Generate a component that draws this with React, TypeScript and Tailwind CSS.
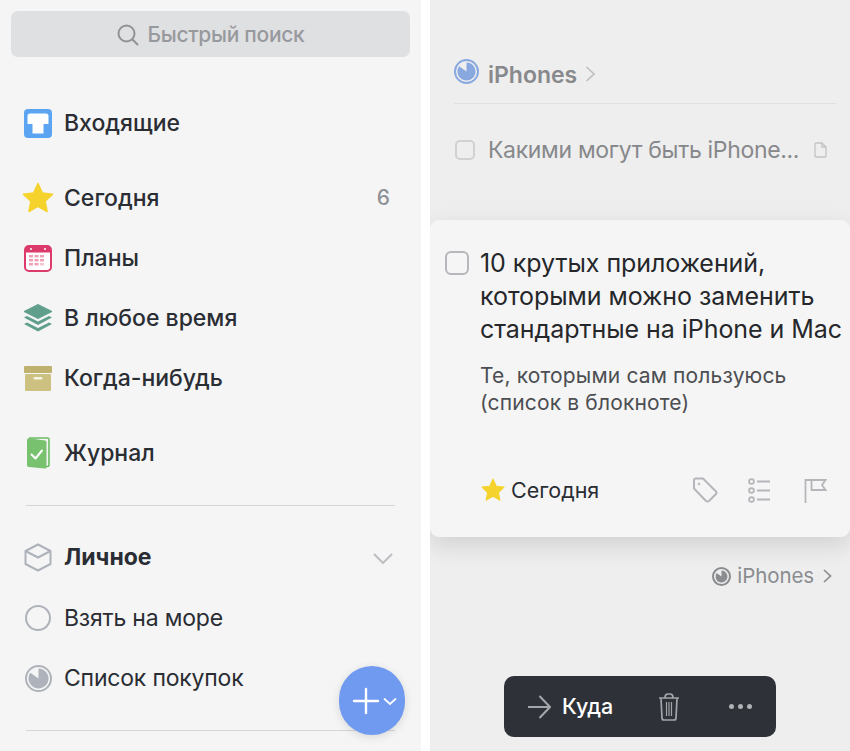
import React from 'react';

const font = "font-['Inter','Roboto',sans-serif]";

const InboxIcon = () => (
  <svg width="28" height="29" viewBox="0 0 28 29">
    <rect x="0" y="0" width="28" height="29" rx="4" fill="#5ba4f2" />
    <path d="M3.5 7 Q3.5 4.5 6 4.5 H22 Q24.5 4.5 24.5 7 V15 H19.5 V24.5 H8.5 V15 H3.5 Z" fill="#fff" />
  </svg>
);

const StarIcon = ({ size = 32 }: { size?: number }) => (
  <svg width={size} height={size} viewBox="0 0 32 32">
    <path
      d="M16 1.5 L20.4 11 L30.6 12.2 L23.1 19.3 L25.1 29.5 L16 24.4 L6.9 29.5 L8.9 19.3 L1.4 12.2 L11.6 11 Z"
      fill="#f5d32c"
      stroke="#f5d32c"
      strokeWidth="1.5"
      strokeLinejoin="round"
    />
  </svg>
);

const CalendarIcon = () => (
  <svg width="28" height="27" viewBox="0 0 28 27">
    <rect x="1" y="1" width="26" height="25" rx="4" fill="#fff" stroke="#dc3a6b" strokeWidth="2" />
    <path d="M1 5 Q1 1 5 1 H23 Q27 1 27 5 V7.5 H1 Z" fill="#dc3a6b" />
    <circle cx="7" cy="4" r="1" fill="#fff" />
    <circle cx="21" cy="4" r="1" fill="#fff" />
    {[10, 14, 18].map((y) =>
      [5, 10.5, 16].map((x) => (
        <rect key={`${x}-${y}`} x={x} y={y} width="4" height="2.4" fill={y === 18 && x === 16 ? '#f6c5d4' : '#f09db6'} />
      ))
    )}
  </svg>
);

const LayersIcon = () => (
  <svg width="30" height="28" viewBox="0 0 30 28">
    <path d="M15 0.5 L29 7.5 L15 14.5 L1 7.5 Z" fill="#5f9f8c" stroke="#5f9f8c" strokeLinejoin="round" />
    <path d="M4 12 L1 13.6 L15 21 L29 13.6 L26 12 L15 17.6 Z" fill="#5f9f8c" />
    <path d="M4 18.5 L1 20 L15 27.5 L29 20 L26 18.5 L15 24 Z" fill="#5f9f8c" />
  </svg>
);

const BoxIcon = () => (
  <svg width="28" height="25" viewBox="0 0 28 25">
    <rect x="0" y="0" width="28" height="7" rx="1" fill="#bfb26f" />
    <rect x="1" y="8" width="26" height="17" rx="1" fill="#cdc182" />
    <rect x="9.5" y="11" width="9" height="2.4" rx="1" fill="#f5f3e4" />
  </svg>
);

const LogbookIcon = () => (
  <svg width="24" height="32" viewBox="0 0 24 32">
    <path d="M3 1 H21.5 Q23 1 23 2.5 V28 Q23 29.5 21.5 29.5 H20" fill="none" stroke="#6cbc63" strokeWidth="1.6" />
    <path d="M1 3 Q1 1 3 1.2 L19 3.4 Q20.5 3.6 20.5 5 V30 Q20.5 31.6 19 31.4 L3 30 Q1 29.8 1 28 Z" fill="#78c16e" />
    <path d="M5.5 17.5 L9.5 21.5 L16 13.5" fill="none" stroke="#fff" strokeWidth="2" strokeLinecap="round" strokeLinejoin="round" />
  </svg>
);

const CubeIcon = () => (
  <svg width="28" height="29" viewBox="0 0 28 29" fill="none" stroke="#aeb2ba" strokeWidth="2" strokeLinejoin="round">
    <path d="M14 1.5 L26.5 8 V21 L14 27.5 L1.5 21 V8 Z" />
    <path d="M1.5 8 L14 14.5 L26.5 8" />
  </svg>
);

const ProgressRing = ({ size, color, border = 2 }: { size: number; color: string; border?: number }) => {
  // pie with the upper left slice left open
  const c = size / 2;
  const r = size / 2 - border - 1.5;
  return (
    <svg width={size} height={size} viewBox={`0 0 ${size} ${size}`}>
      <circle cx={c} cy={c} r={c - border / 2} fill="none" stroke={color} strokeWidth={border} />
      <path d={`M${c} ${c} L${c} ${c - r} A${r} ${r} 0 1 1 ${c - r * 0.82} ${c - r * 0.57} Z`} fill={color} />
    </svg>
  );
};

const SideRow = ({
  icon,
  label,
  weight = 'font-[550]',
  right,
}: {
  icon: React.ReactNode;
  label: string;
  weight?: string;
  right?: React.ReactNode;
}) => (
  <div className="flex h-[60px] items-center">
    <div className="w-[64px] shrink-0 pl-[22px]">
      <div className="flex w-[32px] justify-center">{icon}</div>
    </div>
    <span className={`flex-1 text-[23px] text-[#2a2d33] ${weight}`}>{label}</span>
    {right}
  </div>
);

const Sidebar = () => (
  <div className="relative h-[751px] w-[421px] shrink-0 overflow-hidden bg-[#f5f5f5]">
    <div className="mx-[11px] mt-[11px] flex h-[46px] w-[399px] items-center justify-center gap-[9px] rounded-[7px] bg-[#dfe0e2] pt-[1px]">
      <svg width="22" height="22" viewBox="0 0 22 22" fill="none" stroke="#909296" strokeWidth="2" strokeLinecap="round">
        <circle cx="9.5" cy="9.5" r="8" />
        <path d="M15.5 15.5 L20.5 20.5" />
      </svg>
      <span className="text-[21px] font-medium tracking-[-0.3px] text-[#98999d]">Быстрый поиск</span>
    </div>

    <div className="mt-[36px]">
      <SideRow icon={<InboxIcon />} label="Входящие" />
    </div>
    <div className="mt-[15px]">
      <SideRow
        icon={<StarIcon />}
        label="Сегодня"
        right={<span className="pr-[31px] text-[21px] font-medium text-[#8e9196]">6</span>}
      />
      <SideRow icon={<CalendarIcon />} label="Планы" />
      <SideRow icon={<LayersIcon />} label="В любое время" />
      <SideRow icon={<BoxIcon />} label="Когда-нибудь" />
    </div>
    <div className="mt-[15px]">
      <SideRow icon={<LogbookIcon />} label="Журнал" />
    </div>

    <div className="mx-[26px] mt-[22px] h-px w-[369px] bg-[#d6d6d8]" />

    <div className="mt-[21px]">
      <SideRow
        icon={<CubeIcon />}
        label="Личное"
        weight="font-bold"
        right={
          <svg className="mr-[28px] mt-[2px]" width="20" height="11" viewBox="0 0 20 11" fill="none" stroke="#bcbec3" strokeWidth="2">
            <path d="M1 1 L10 10 L19 1" />
          </svg>
        }
      />
      <div className="mt-px">
        <SideRow
          icon={<div className="h-[26px] w-[26px] rounded-full border-2 border-[#aeb2ba]" />}
          label="Взять на море"
          weight="font-normal tracking-[-0.2px]"
        />
        <SideRow
          icon={<ProgressRing size={27} color="#aeb2ba" />}
          label="Список покупок"
          weight="font-normal tracking-[-0.2px]"
        />
      </div>
    </div>

    <div className="mx-[26px] mt-[22px] h-px w-[369px] bg-[#d6d6d8]" />

    <div className="absolute left-[339px] top-[666px] flex h-[69px] w-[66px] items-center justify-center rounded-full bg-[#6f9af0] shadow-[0_2px_10px_rgba(0,0,0,0.12)]">
      <svg width="66" height="28" viewBox="0 0 66 28" fill="none" stroke="#fff" strokeLinecap="round">
        <path d="M27 2 V26 M15 14 H39" strokeWidth="2.4" />
        <path d="M45.5 12 L51 17 L56.5 12" strokeWidth="1.7" />
      </svg>
    </div>
  </div>
);

const Detail = () => (
  <div className="flex h-[751px] w-[420px] shrink-0 flex-col overflow-hidden bg-[#eeeeee]">
    <div className="ml-[24px] mr-[14px] mt-[59px] flex h-[45px] items-start gap-[9px] border-b border-[#dfdfe0] pb-[12px]">
      <ProgressRing size={25} color="#89a8e0" />
      <span className="-mt-[1px] text-[23px] font-semibold leading-[34px] text-[#88898c]">iPhones</span>
      <svg className="mt-[7px] -ml-px" width="11" height="16" viewBox="0 0 11 16" fill="none" stroke="#bdbebf" strokeWidth="1.6">
        <path d="M1.5 1 L9 8 L1.5 15" />
      </svg>
    </div>

    <div className="ml-[25px] mt-[29px] flex h-[34px] items-center">
      <div className="h-[20px] w-[20px] rounded-[5px] border-2 border-[#d1d1d3]" />
      <span className="ml-[13px] text-[23px] tracking-[-0.33px] text-[#87888b]">Какими могут быть iPhone...</span>
      <svg className="ml-[15px]" width="13" height="16" viewBox="0 0 13 16" fill="none" stroke="#c3c4c6" strokeWidth="1.3">
        <path d="M1 2 Q1 1 2 1 H8 L12 5 V14 Q12 15 11 15 H2 Q1 15 1 14 Z M8 1 V5 H12" />
      </svg>
    </div>

    <div className="mt-[53px] flex h-[317px] flex-col rounded-[9px] bg-[#f5f5f5] pl-[15px] pr-[6px] pt-[28px] shadow-[0_8px_24px_rgba(0,0,0,0.13)]">
      <div className="flex items-start">
        <div className="mt-[3px] h-[24px] w-[24px] shrink-0 rounded-[6px] border-2 border-[#b5b7bb]" />
        <div className="-mt-px ml-[11px] text-[25px] leading-[33px] tracking-[-0.05px] text-[#25272b]">
          10 крутых приложений,
          <br />
          которыми можно заменить
          <br />
          стандартные на iPhone и Mac
        </div>
      </div>
      <div className="ml-[35px] mt-[16px] text-[21px] leading-[27px] tracking-[0.15px] text-[#4c4e52]">
        Те, которыми сам пользуюсь
        <br />
        (список в блокноте)
      </div>
      <div className="ml-[36px] mr-[17px] mt-[58px] flex items-center">
        <StarIcon size={24} />
        <span className="ml-[6px] text-[21.5px] text-[#2a2d33]">Сегодня</span>
        <svg className="ml-auto" width="26" height="26" viewBox="0 0 26 26" fill="none" stroke="#b4b6ba" strokeWidth="2" strokeLinejoin="round">
          <path d="M2 3.5 Q2 1.5 4 1.5 H11 L24 14.5 Q25 16 24 17 L17 24 Q15.5 25 14 24 L2 11.5 Z" />
          <circle cx="7" cy="7" r="1" fill="#b4b6ba" strokeWidth="0.6" />
        </svg>
        <svg className="ml-[30px]" width="23" height="25" viewBox="0 0 23 25" fill="none" stroke="#b4b6ba" strokeWidth="1.8">
          <circle cx="3.5" cy="3.5" r="2.4" />
          <circle cx="3.5" cy="12.5" r="2.4" />
          <circle cx="3.5" cy="21.5" r="2.4" />
          <path d="M9 3.5 H22 M9 12.5 H22 M9 21.5 H22" />
        </svg>
        <svg className="ml-[33px]" width="23" height="25" viewBox="0 0 23 25" fill="none" stroke="#b4b6ba" strokeWidth="1.8">
          <path d="M1.5 1 V25" />
          <path d="M1.5 2 H21.5 L18 7 L21.5 12 H7.5 V2" />
        </svg>
      </div>
    </div>

    <div className="mr-[18px] mt-[26px] flex h-[26px] items-center justify-end">
      <ProgressRing size={19} color="#8a8c90" />
      <span className="ml-[6px] text-[20.5px] tracking-[-0.1px] text-[#8a8c90]">iPhones</span>
      <svg className="ml-[9px]" width="9" height="14" viewBox="0 0 9 14" fill="none" stroke="#8a8c90" strokeWidth="1.7">
        <path d="M1 1 L7.5 7 L1 13" />
      </svg>
    </div>

    <div className="ml-[74px] mt-[87px] flex h-[61px] w-[272px] items-center rounded-[10px] bg-[#2e3138] pl-[24px]">
      <svg width="23" height="24" viewBox="0 0 23 24" fill="none" stroke="#a4a6aa" strokeWidth="2">
        <path d="M0 12 H22 M11.5 1 L22 12 L11.5 23" />
      </svg>
      <span className="ml-[11px] text-[21.5px] font-medium text-white">Куда</span>
      <svg className="ml-[45px]" width="22" height="28" viewBox="0 0 22 28" fill="none" stroke="#a4a6aa" strokeWidth="1.7" strokeLinejoin="round">
        <path d="M1 5 H21 M7 4.5 Q7 1 10 1 H12 Q15 1 15 4.5" />
        <path d="M3 5.5 L4 25 Q4 27 6 27 H16 Q18 27 18 25 L19 5.5" />
        <path d="M8.5 9 V23 M11 9 V23 M13.5 9 V23" strokeWidth="1.2" />
      </svg>
      <div className="ml-[49px] flex gap-[4px]">
        <div className="h-[5px] w-[5px] rounded-full bg-[#b0b2b6]" />
        <div className="h-[5px] w-[5px] rounded-full bg-[#b0b2b6]" />
        <div className="h-[5px] w-[5px] rounded-full bg-[#b0b2b6]" />
      </div>
    </div>
  </div>
);

export default function App() {
  return (
    <div className={`flex h-[751px] w-[850px] gap-[9px] overflow-hidden bg-white ${font}`}>
      <Sidebar />
      <Detail />
    </div>
  );
}
